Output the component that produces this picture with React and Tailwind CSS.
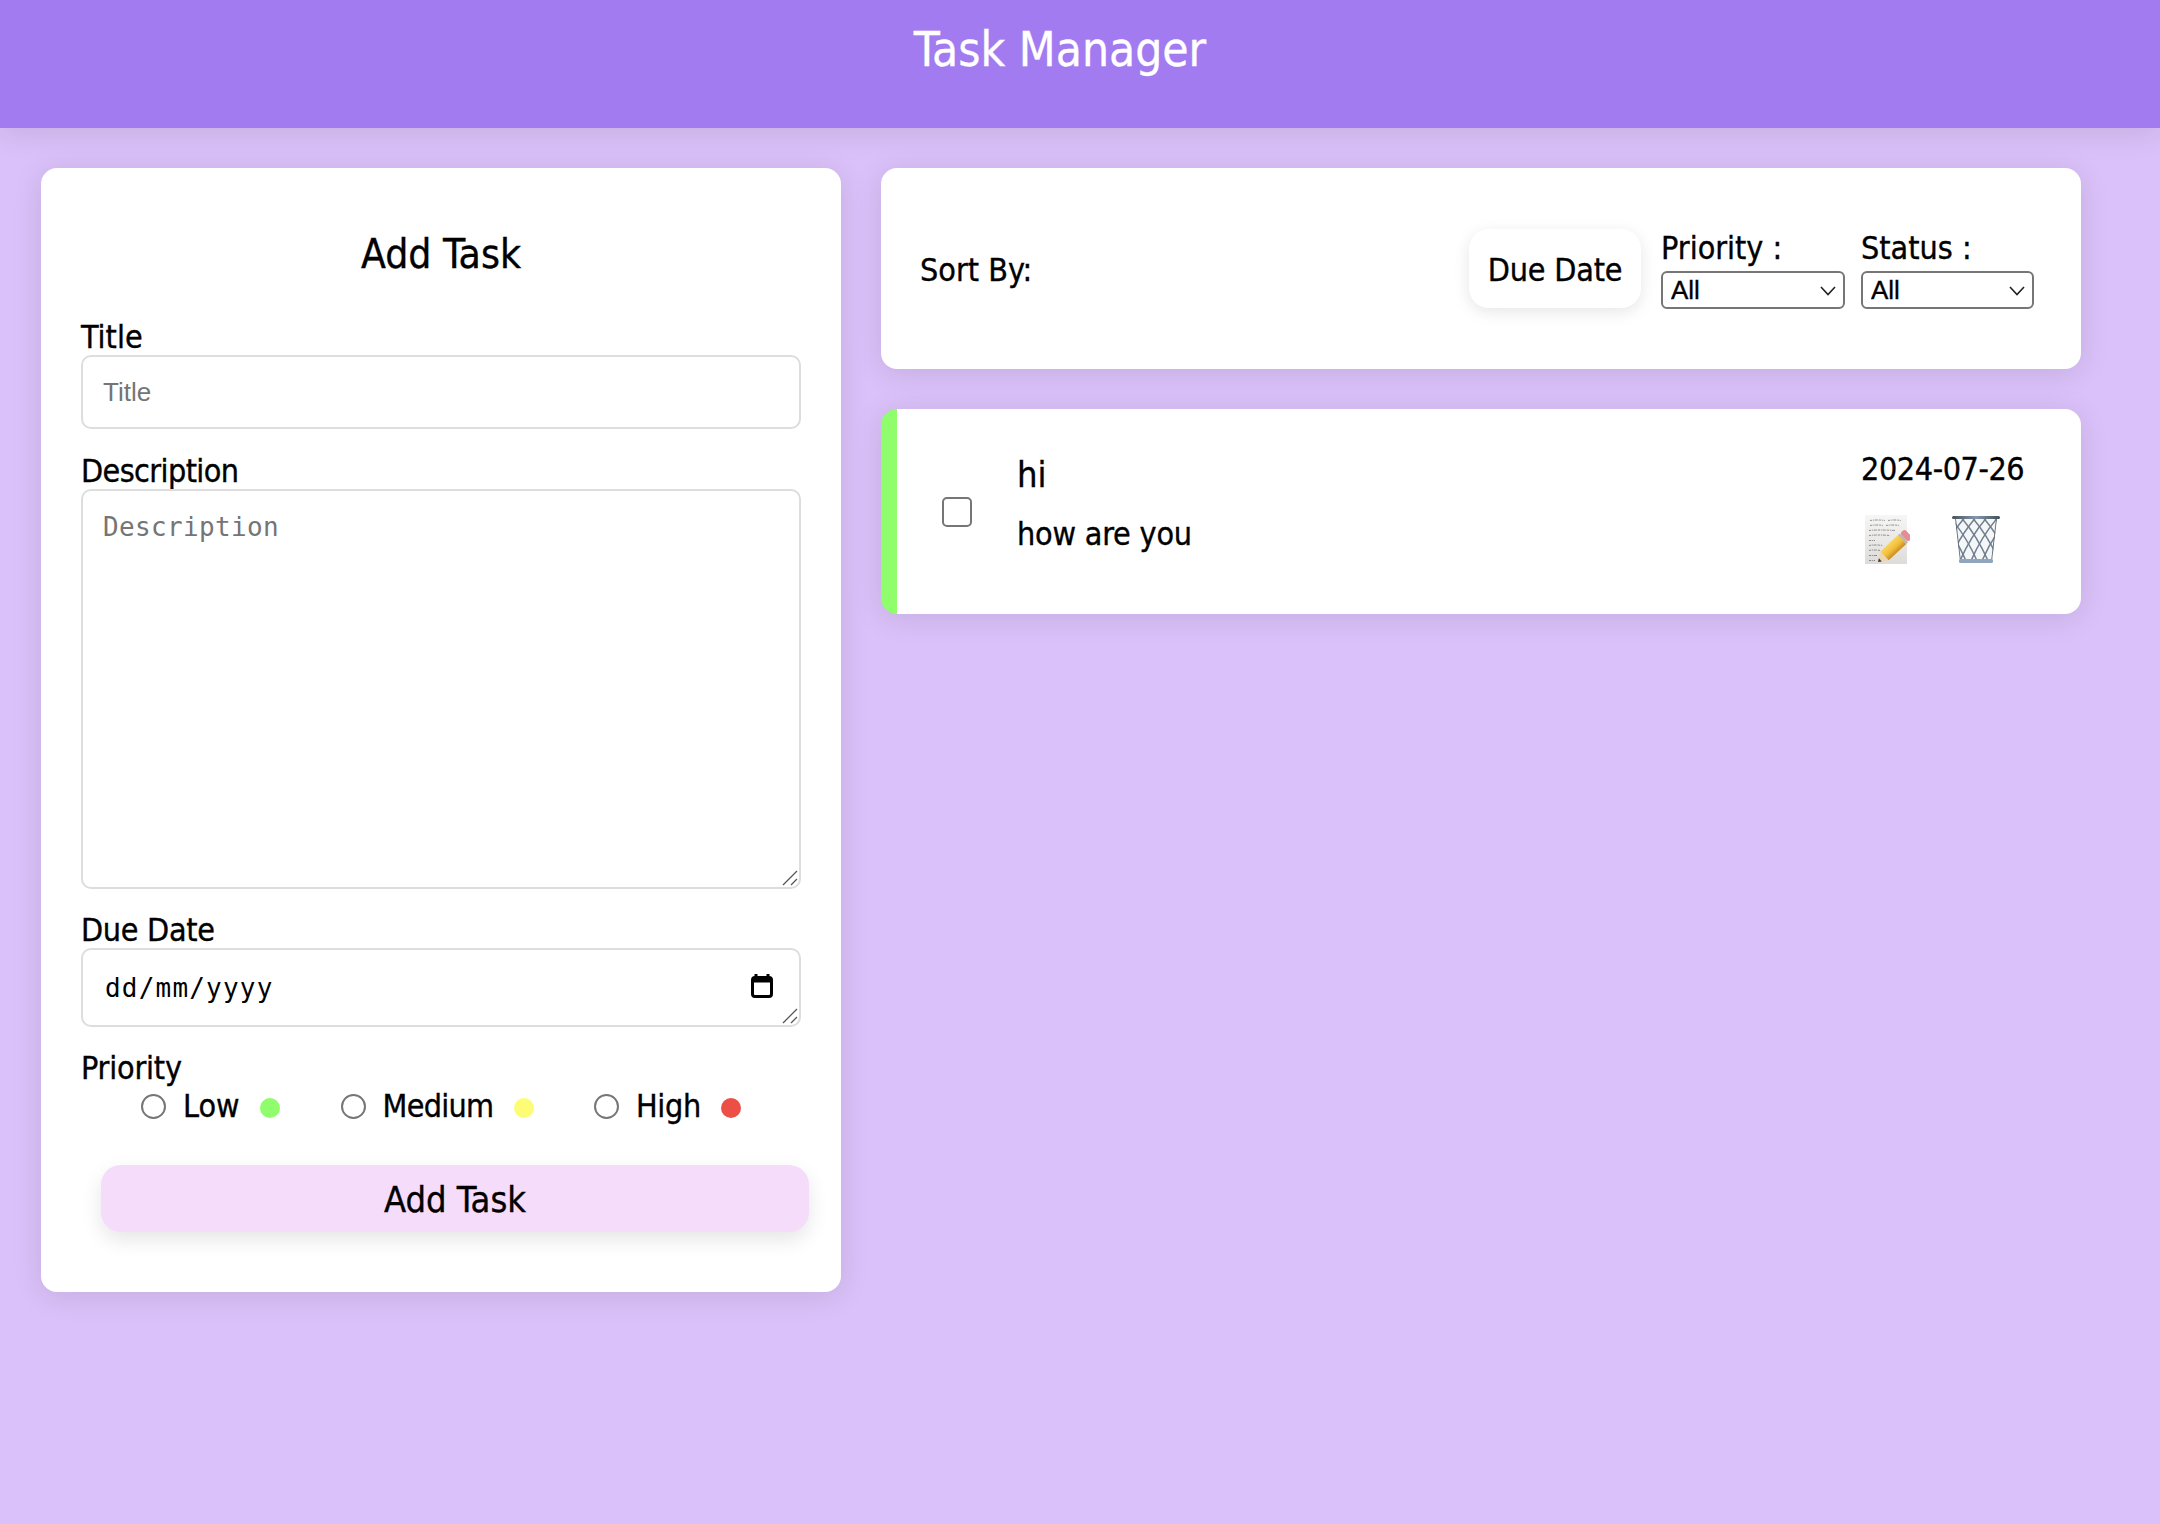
import React from 'react';

// Notepad emoji drawn by hand, no emoji font in the sandbox
const MemoIcon = () => (
  <svg width="45" height="49" viewBox="0 0 45 49">
    <defs>
      <linearGradient id="paper" x1="0" y1="0" x2="0" y2="1">
        <stop offset="0" stopColor="#f6f6f5" />
        <stop offset="1" stopColor="#dddcda" />
      </linearGradient>
      <linearGradient id="pencil" x1="0" y1="0" x2="0" y2="1">
        <stop offset="0" stopColor="#f9d45c" />
        <stop offset="0.55" stopColor="#f2bd3b" />
        <stop offset="1" stopColor="#c98d22" />
      </linearGradient>
    </defs>
    <rect x="0" y="0" width="42" height="49" fill="url(#paper)" />
    <g stroke="#4a4844" strokeWidth="0.7" strokeDasharray="2.2 0.9 1.2 0.7 3 1" fill="none" opacity="0.8">
      <path d="M5 5.5Q12 4.5 20 5.5M23 5.5Q30 4.5 36 5.5" />
      <path d="M5 10.5Q12 9.5 18 10.5M21 10.5Q28 9.5 34 10.5" />
      <path d="M4 15.5Q15 14.5 30 15.5" />
      <path d="M4 20.5Q14 19.5 25 20.5" />
      <path d="M4 25.5H10" />
      <path d="M4 30.5Q10 29.5 18 30.5" />
      <path d="M4 35.5Q9 34.5 15 35.5" />
      <path d="M4 40.5H12" />
      <path d="M4 45.5H10" />
    </g>
    <g transform="translate(13 47) rotate(-43)">
      <path d="M0 0L8 -5.5H12V5.5H8Z" fill="#eed6ae" />
      <path d="M0 0L3.2 -2.2V2.2Z" fill="#3f3a34" />
      <rect x="9" y="-6" width="24" height="12" fill="url(#pencil)" />
      <rect x="33" y="-6" width="2.5" height="12" fill="#b9b7b2" />
      <rect x="35.5" y="-6" width="6.5" height="12" rx="3" fill="#e58d92" />
    </g>
  </svg>
);

// Wire wastebasket
const TrashIcon = () => {
  const wires = [];
  for (let i = -48; i < 60; i += 11) {
    wires.push(<path key={`a${i}`} d={`M${i} 0Q${i + 18} 20 ${i + 30} 48`} />);
    wires.push(<path key={`b${i}`} d={`M${i + 30} 0Q${i + 12} 20 ${i} 48`} />);
  }
  return (
    <svg width="48" height="48" viewBox="0 0 48 48">
      <defs>
        <clipPath id="basket">
          <path d="M3 3H45L40 46H8Z" />
        </clipPath>
        <linearGradient id="rim" x1="0" y1="0" x2="1" y2="0">
          <stop offset="0" stopColor="#48525c" />
          <stop offset="0.5" stopColor="#8398ad" />
          <stop offset="1" stopColor="#444d56" />
        </linearGradient>
      </defs>
      <g clipPath="url(#basket)">
        <rect x="0" y="0" width="48" height="48" fill="#f4f6f8" />
        <g stroke="#6f7f90" strokeWidth="1.5" fill="none">{wires}</g>
        <path d="M3 3L8 46" stroke="#5f6d7b" strokeWidth="1.8" />
        <path d="M45 3L40 46" stroke="#5f6d7b" strokeWidth="1.8" />
      </g>
      <rect x="0" y="1" width="48" height="3" rx="1.5" fill="url(#rim)" />
      <rect x="7" y="44" width="34" height="4" rx="1.5" fill="#8fa6bc" />
    </svg>
  );
};

const ResizeGrip = () => (
  <svg className="absolute right-[3px] bottom-[3px] pointer-events-none" width="16" height="16" viewBox="0 0 16 16">
    <path d="M1 15L15 1M9 15L15 9" stroke="#555" strokeWidth="1.3" fill="none" />
  </svg>
);

const Chevron = () => (
  <svg className="absolute right-[9px] top-[15px] pointer-events-none" width="16" height="10" viewBox="0 0 16 10">
    <path d="M1 1L8 8.5L15 1" stroke="#222" strokeWidth="1.6" fill="none" />
  </svg>
);

const FilterSelect = ({ label, widthClass }) => (
  <div className={`flex flex-col ${widthClass}`}>
    <label className="h-[42px] leading-[38px] whitespace-nowrap">{label}</label>
    <div className="relative">
      <select className="block appearance-none w-full h-[38px] border-2 border-[#767676] rounded-[6px] bg-white pl-[8px] font-['Liberation_Sans',sans-serif] text-[26px] leading-[34px] text-black">
        <option>All</option>
      </select>
      <Chevron />
    </div>
  </div>
);

const priorities = [
  { label: 'Low', dot: 'bg-[#90fd6c]', textClass: 'w-[57px]' },
  { label: 'Medium', dot: 'bg-[#fcfd74]', textClass: 'w-[111px] tracking-[-0.7px]' },
  { label: 'High', dot: 'bg-[#eb4f45]', textClass: 'w-[65px] tracking-[-0.3px]' },
];

const inputClass =
  'block w-full border-2 border-[#dddddd] rounded-[10px] bg-white px-[20px] text-[26px] placeholder:text-[#757575] outline-none';

export default function App() {
  return (
    <div className="min-h-screen bg-[#dac1f9] text-black text-[32px] font-['DejaVu_Sans_Condensed','DejaVu_Sans',sans-serif] [-webkit-text-stroke:0.35px]">
      <header className="h-[128px] pr-10 bg-[#a37bf0] text-white text-center text-[47.5px] leading-[100px] shadow-[0_4px_30px_rgba(0,0,0,0.1)]">
        Task Manager
      </header>

      <main className="grid grid-cols-[800px_1200px] gap-10 pl-[41px] pt-10 items-start">
        {/* Formulario */}
        <section className="bg-white rounded-2xl p-10 h-[1124px] shadow-[0_4px_30px_rgba(0,0,0,0.1)]">
          <h2 className="h-[90px] mb-[17px] text-center text-[40.5px] leading-[92px]">Add Task</h2>

          <label className="block h-[40px] leading-[44px]">Title</label>
          <input className={`${inputClass} h-[74px] font-['Liberation_Sans',sans-serif] [-webkit-text-stroke:0px]`} placeholder="Title" />

          <label className="block h-[38px] mt-[22px] leading-[40px] tracking-[-0.6px]">Description</label>
          <div className="relative">
            <textarea
              className={`${inputClass} h-[400px] py-[17px] resize-none font-['DejaVu_Sans_Mono',monospace] text-[26.9px] tracking-[0.35px] [-webkit-text-stroke:0px]`}
              placeholder="Description"
            />
            <ResizeGrip />
          </div>

          <label className="block h-[38px] mt-[21px] leading-[40px] tracking-[-0.3px]">Due Date</label>
          <div className="relative">
            <input
              className={`${inputClass} h-[79px] pl-[22px] font-['DejaVu_Sans_Mono',monospace] tracking-[1.2px] [-webkit-text-stroke:0px] placeholder:text-black`}
              placeholder="dd/mm/yyyy"
            />
            <svg className="absolute right-[28px] top-[26px]" width="22" height="24" viewBox="0 0 22 24">
              <path d="M5 0V4M17 0V4" stroke="#000" strokeWidth="3" />
              <rect x="1.5" y="3.5" width="19" height="19" rx="2.5" fill="none" stroke="#000" strokeWidth="3" />
              <rect x="1.5" y="3.5" width="19" height="5" fill="#000" />
            </svg>
            <ResizeGrip />
          </div>

          <label className="block h-[40px] mt-[21px] leading-[40px] tracking-[-0.2px]">Priority</label>
          <div className="flex items-center gap-[60.5px] pl-[60px] h-[36px]">
            {priorities.map((p) => (
              <label key={p.label} className="flex items-center">
                <input
                  type="radio"
                  name="priority"
                  className="appearance-none w-[25px] h-[25px] rounded-full border-2 border-[#767676] bg-white mr-[17px]"
                />
                <span className={`whitespace-nowrap ${p.textClass}`}>{p.label}</span>
                <span className={`w-5 h-5 rounded-full ml-[20px] mt-[4px] ${p.dot}`} />
              </label>
            ))}
          </div>

          <button className="block w-[708px] h-[67px] ml-5 mt-[41px] pt-[2px] rounded-[20px] bg-[#f5dcfa] text-[36px] shadow-[0_8px_20px_rgba(0,0,0,0.1)]">
            Add Task
          </button>
        </section>

        {/* Filtros y tareas */}
        <div className="flex flex-col gap-10">
          <section className="flex items-center h-[201px] pl-[39px] pr-[47px] bg-white rounded-2xl shadow-[0_4px_30px_rgba(0,0,0,0.1)]">
            <span className="pt-[2px]">Sort By:</span>
            <button className="ml-auto w-[172px] h-[79px] pt-[2px] rounded-[20px] bg-white tracking-[-0.2px] shadow-[0_4px_16px_rgba(0,0,0,0.1)]">
              Due Date
            </button>
            <div className="flex gap-4 ml-[20px]">
              <FilterSelect label="Priority :" widthClass="w-[184px]" />
              <FilterSelect label="Status :" widthClass="w-[173px]" />
            </div>
          </section>

          <article className="flex items-center h-[205px] bg-white rounded-2xl border-l-16 border-[#90fd6c] shadow-[0_4px_30px_rgba(0,0,0,0.1)]">
            <input
              type="checkbox"
              className="appearance-none w-[30px] h-[30px] ml-[45px] border-2 border-[#767676] rounded-[5px] bg-white"
            />
            <div className="ml-[45px] mb-[15px]">
              <h3 className="text-[36px] leading-[60px]">hi</h3>
              <p className="text-[32px] leading-[58px] tracking-[-0.2px]">how are you</p>
            </div>
            <div className="ml-auto mr-[58px] mb-[11px] w-[162px]">
              <div className="whitespace-nowrap leading-[40px] tracking-[-0.4px]">2024-07-26</div>
              <div className="flex gap-[42px] mt-[26px] ml-[4px]">
                <MemoIcon />
                <TrashIcon />
              </div>
            </div>
          </article>
        </div>
      </main>
    </div>
  );
}
